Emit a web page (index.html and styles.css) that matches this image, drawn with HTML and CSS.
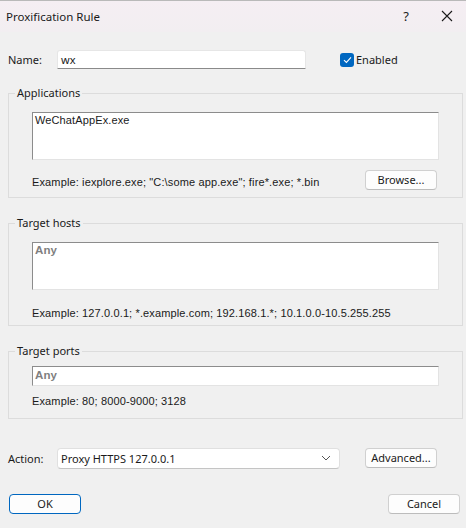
FILE: index.html
```html
<!DOCTYPE html>
<html lang="en">
<head>
    <meta charset="UTF-8">
    <meta name="viewport" content="width=device-width, initial-scale=1.0">
    <title>Proxification Rule</title>
    <link rel="stylesheet" href="styles.css">
</head>
<body>
    <div class="window">
        <div class="titlebar">
            <span class="title">Proxification Rule</span>
            <span class="title-help">?</span>
            <span class="title-close">
                <svg width="12" height="12" viewBox="0 0 12 12"><path d="M1 1 L11 11 M11 1 L1 11" stroke="#1a1a1a" stroke-width="1.1" fill="none"/></svg>
            </span>
        </div>

        <div class="content">
            <div class="name-row">
                <span class="label">Name:</span>
                <div class="text-input name-input">wx</div>
                <label class="checkbox">
                    <span class="check">
                        <svg width="9" height="8" viewBox="0 0 9 8"><path d="M1 4.2 L3.4 6.4 L8 1.4" stroke="#fff" stroke-width="1.1" fill="none"/></svg>
                    </span>
                    Enabled
                </label>
            </div>

            <div class="group group-apps">
                <div class="group-title">Applications</div>
                <div class="list-box">WeChatAppEx.exe</div>
                <div class="hint-row">
                    <span class="hint">Example: iexplore.exe; "C:\some app.exe"; fire*.exe; *.bin</span>
                    <button class="btn btn-browse">Browse...</button>
                </div>
            </div>

            <div class="group group-hosts">
                <div class="group-title">Target hosts</div>
                <div class="list-box"><span class="any">Any</span></div>
                <div class="hint hint-hosts">Example: 127.0.0.1; *.example.com; 192.168.1.*; 10.1.0.0-10.5.255.255</div>
            </div>

            <div class="group group-ports">
                <div class="group-title">Target ports</div>
                <div class="line-box"><span class="any">Any</span></div>
                <div class="hint hint-ports">Example: 80; 8000-9000; 3128</div>
            </div>

            <div class="action-row">
                <span class="label">Action:</span>
                <div class="select">
                    <span>Proxy HTTPS 127.0.0.1</span>
                    <svg width="10" height="6" viewBox="0 0 10 6"><path d="M1 1 L5 5 L9 1" stroke="#555" stroke-width="1" fill="none"/></svg>
                </div>
                <button class="btn">Advanced...</button>
            </div>

            <div class="button-row">
                <button class="btn btn-default">OK</button>
                <button class="btn">Cancel</button>
            </div>
        </div>
    </div>
</body>
</html>
```

FILE: styles.css
```css
body {
    margin: 0;
    background: #f0f0f0;
    font-family: 'Segoe UI', 'Noto Sans', sans-serif;
    font-size: 11px;
    color: #1a1a1a;
}
.window {
    width: 466px;
    height: 528px;
    overflow: hidden;
    border-top: 1px solid #b9b9b9;
    box-sizing: border-box;
    background: #f0f0f0;
}
.titlebar {
    height: 31px;
    display: flex;
    align-items: center;
    padding-left: 6px;
    background: linear-gradient(to bottom, #f5eef3, #f2eef1);
}
.title {
    flex: 1;
    font-size: 11.5px;
    margin-top: -1px;
}
.title-help {
    width: 20px;
    text-align: center;
    font-size: 13px;
    margin-right: 25px;
    margin-top: -2px;
}
.title-close {
    width: 14px;
    display: flex;
    margin-right: 11px;
    margin-top: -1px;
}
.content {
    padding: 0 3px 0 8px;
}
.label {
    width: 49px;
    flex-shrink: 0;
}
.name-row {
    display: flex;
    align-items: center;
    margin-top: 18px;
    height: 19px;
}
.text-input {
    background: #fff;
    border: 1px solid #e6e6e6;
    border-bottom-color: #8a8a8a;
    border-radius: 3px 3px 0 0;
    box-sizing: border-box;
    height: 19px;
    line-height: 17px;
    padding-left: 3px;
}
.name-input {
    width: 249px;
}
.checkbox {
    display: flex;
    align-items: center;
    margin-left: 34px;
    gap: 2px;
}
.check {
    width: 14px;
    height: 14px;
    border-radius: 3px;
    background: #0067c0;
    display: flex;
    align-items: center;
    justify-content: center;
}
.group {
    border: 1px solid #dcdcdc;
    padding: 0 23px;
}
.group-title {
    width: max-content;
    line-height: 14px;
    margin: -8px 0 0 -17px;
    padding: 0 2px;
    background: #f0f0f0;
}
.group-apps {
    margin-top: 24px;
    padding-bottom: 7px;
}
.group-hosts {
    margin-top: 25px;
    padding-bottom: 5px;
}
.group-ports {
    margin-top: 25px;
    padding-bottom: 10px;
}
.list-box,
.line-box {
    background: #fff;
    border: 1px solid #e3e3e3;
    border-top-color: #8c8c8c;
    border-left-color: #8c8c8c;
    box-sizing: border-box;
    padding: 1px 2px;
    font-family: Tahoma, 'Liberation Sans', sans-serif;
    font-size: 11px;
    letter-spacing: 0.12px;
    line-height: 13px;
}
.list-box {
    height: 48px;
    margin-top: 12px;
}
.line-box {
    height: 20px;
    margin-top: 8px;
    padding-top: 2px;
}
.any {
    font-weight: bold;
    font-size: 11.5px;
    color: #7f7f7f;
}
.hint {
    font-family: Tahoma, 'Liberation Sans', sans-serif;
    font-size: 11px;
    letter-spacing: 0.13px;
    line-height: 14px;
}
.hint-row {
    display: flex;
    justify-content: space-between;
    align-items: flex-start;
    margin-top: 10px;
}
.hint-row .hint {
    padding-top: 5px;
}
.hint-hosts {
    margin-top: 16px;
}
.hint-ports {
    margin-top: 8px;
}
.btn {
    font-family: 'Segoe UI', 'Noto Sans', sans-serif;
    font-size: 11px;
    color: #1a1a1a;
    background: #fdfdfd;
    border: 1px solid #d0d0d0;
    border-bottom-color: #bcbcbc;
    border-radius: 4px;
    height: 20px;
    width: 72px;
    padding: 0;
    line-height: 18px;
}
.btn-browse {
    margin-right: 2px;
}
.btn-default {
    border: 1px solid #0067c0;
}
.action-row {
    display: flex;
    align-items: center;
    margin-top: 29px;
    height: 20px;
}
.select {
    width: 283px;
    height: 21px;
    box-sizing: border-box;
    background: #fff;
    border: 1px solid #e0e0e0;
    border-bottom-color: #c4c4c4;
    border-radius: 4px;
    display: flex;
    align-items: center;
    justify-content: space-between;
    padding: 0 8px 0 3px;
    margin-right: 25px;
}
.button-row {
    display: flex;
    justify-content: space-between;
    margin-top: 26px;
    padding: 0 3px 0 1px;
}
```
